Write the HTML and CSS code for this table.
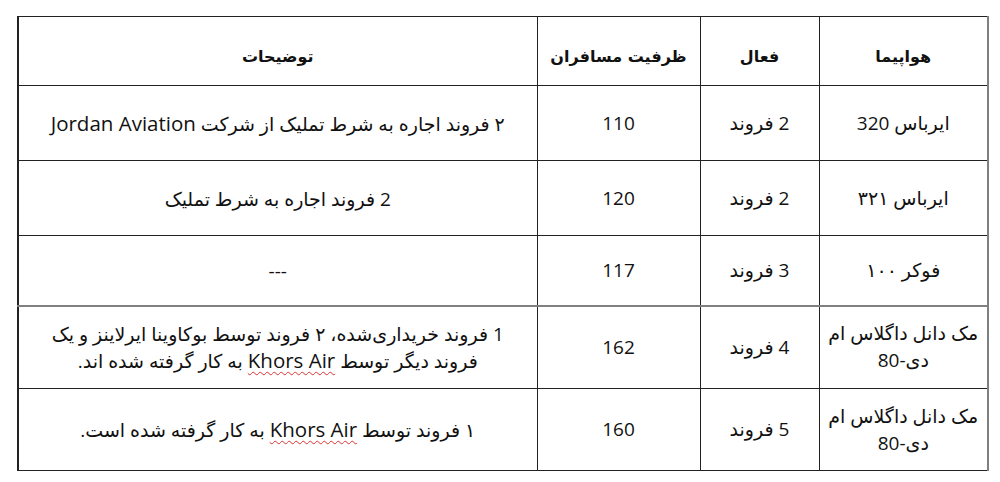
FILE: index.html
```html
<!DOCTYPE html>
<html lang="fa">
<head>
<meta charset="utf-8">
<link rel="stylesheet" href="styles.css">
</head>
<body>
<div class="page">
<table class="fleet" dir="rtl">
  <colgroup>
    <col class="c-plane">
    <col class="c-active">
    <col class="c-cap">
    <col class="c-desc">
  </colgroup>
  <thead>
    <tr class="r-head">
      <th>هواپیما</th>
      <th>فعال</th>
      <th>ظرفیت مسافران</th>
      <th class="last">توضیحات</th>
    </tr>
  </thead>
  <tbody>
    <tr class="r1">
      <td>ایرباس 320</td>
      <td>2 فروند</td>
      <td>110</td>
      <td class="desc">۲ فروند اجاره به شرط تملیک از شرکت <span class="lat">Jordan Aviation</span></td>
    </tr>
    <tr class="r2">
      <td>ایرباس ۳۲۱</td>
      <td>2 فروند</td>
      <td>120</td>
      <td class="desc">2 فروند اجاره به شرط تملیک</td>
    </tr>
    <tr class="r3">
      <td>فوکر ۱۰۰</td>
      <td>3 فروند</td>
      <td>117</td>
      <td class="desc">---</td>
    </tr>
    <tr class="r4">
      <td class="plane-wrap">مک دانل داگلاس ام دی-80</td>
      <td>4 فروند</td>
      <td>162</td>
      <td class="desc"><span class="line">1 فروند خریداری‌شده، ۲ فروند توسط بوکاوینا ایرلاینز و یک</span><span class="line">فروند دیگر توسط <span class="lat spell">Khors Air</span> به کار گرفته شده اند.</span></td>
    </tr>
    <tr class="r5">
      <td class="plane-wrap">مک دانل داگلاس ام دی-80</td>
      <td>5 فروند</td>
      <td>160</td>
      <td class="desc">۱ فروند توسط <span class="lat spell">Khors Air</span> به کار گرفته شده است.</td>
    </tr>
  </tbody>
</table>
</div>
</body>
</html>
```

FILE: styles.css
```css
html, body {
  margin: 0;
  padding: 0;
  background: #ffffff;
}

.page {
  padding: 16px 13px 0 17px;
}

.fleet {
  width: 970px;
  table-layout: fixed;
  border-collapse: collapse;
  font-family: "Open Sans", "DejaVu Sans", sans-serif;
  font-size: 19px;
  color: #111;
  border-top: 1px solid #333;
  border-bottom: 1px solid #222;
  border-right: 2px solid #808080;
  border-left: 2px solid #222;
}

.c-plane { width: 169px; }
.c-active { width: 119px; }
.c-cap { width: 163px; }
.c-desc { width: 519px; }

.fleet th,
.fleet td {
  border: 1px solid #222;
  text-align: center;
  vertical-align: middle;
  padding: 0 6px;
  line-height: 27px;
}

.fleet th {
  font-family: "DejaVu Sans", sans-serif;
  font-weight: bold;
  font-size: 16px;
  padding-top: 10px;
}

.fleet td.desc {
  padding: 2px 14px 0;
}

.line {
  display: block;
  white-space: nowrap;
}

.r-head { height: 69px; }
.r1 { height: 75px; }
.r2 { height: 75px; }
.r3 { height: 70px; }
.r4 { height: 83px; }
.r5 { height: 82px; }

.r3 td { border-bottom: 2px solid #808080; }

.plane-wrap { padding: 0 8px; }

.lat {
  font-family: "Open Sans", sans-serif;
  font-size: 20.5px;
  line-height: 20px;
}

.spell {
  text-decoration: underline wavy #e03030;
  text-decoration-thickness: 1px;
  text-underline-offset: 3px;
}
```
